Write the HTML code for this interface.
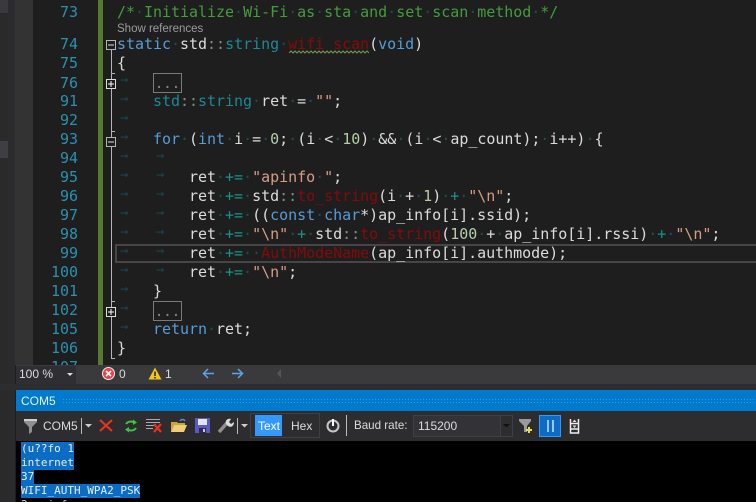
<!DOCTYPE html>
<html><head><meta charset="utf-8"><style>
html,body{margin:0;padding:0;background:#1e1e1e}
#p{position:relative;width:756px;height:502px;overflow:hidden;background:#1e1e1e;font-family:"DejaVu Sans Mono","Liberation Mono",monospace;font-size:15px;letter-spacing:-.03px}
#p div,#p svg{position:absolute}
.l{left:117px;height:20px;line-height:20px;white-space:pre;color:#dcdcdc;margin-top:-1px}
.n{left:40px;width:38px;text-align:right;height:20px;line-height:20px;color:#2b91af;margin-top:-1px}
.a{height:20px;line-height:20px;color:#1a4450;font-size:14px;transform:translateY(-3px)}
i{font-style:normal;color:#1d4d5a}
.c{color:#449c3d}.k{color:#569cd6}.t{color:#1c8a94}.o{color:#15968a}.s{color:#d69d85}.e{color:#860a0a}.m{color:#b5cea8}.g{color:#8a8a8a}
.u{font-family:"Liberation Sans",sans-serif;font-size:12px;color:#dcdcdc;white-space:pre;letter-spacing:0}
.box{border:1px solid #7a7a7a;box-sizing:border-box;width:29px;height:20px;left:153px;color:#8a8a8a;text-align:center;line-height:20px;font-size:14px}
.sel{left:21px;height:14px;background:#0a6cc4;color:#e6eef8;font-size:11px;line-height:14px;white-space:pre;letter-spacing:0}
</style></head><body><div id="p">
<div style="left:0;top:0;width:8px;height:502px;background:#2a2a2b"></div>
<div style="left:0;top:0;width:8px;height:13px;background:#3a3a3e"></div>
<div style="left:0;top:141px;width:8px;height:17px;background:#3e3e44"></div>
<div style="left:8px;top:0;width:7px;height:502px;background:#2b2b2e"></div>
<div style="left:15px;top:0;width:18px;height:365px;background:#333334"></div>
<div style="left:98px;top:0;width:5px;height:365px;background:#567a31"></div>

<div class="n" style="top:3px">73</div>
<div class="n" style="top:35px">74</div>
<div class="n" style="top:54px">75</div>
<div class="n" style="top:74px">76</div>
<div class="n" style="top:92px">91</div>
<div class="n" style="top:111px">92</div>
<div class="n" style="top:130px">93</div>
<div class="n" style="top:149px">94</div>
<div class="n" style="top:168px">95</div>
<div class="n" style="top:187px">96</div>
<div class="n" style="top:206px">97</div>
<div class="n" style="top:225px">98</div>
<div class="n" style="top:244px">99</div>
<div class="n" style="top:263px">100</div>
<div class="n" style="top:282px">101</div>
<div class="n" style="top:301px">102</div>
<div class="n" style="top:320px">105</div>
<div class="n" style="top:339px">106</div>
<div class="n" style="top:358px">107</div>

<div style="left:111px;top:50px;width:1px;height:308px;background:#b5b5b5"></div>
<div style="left:111px;top:358px;width:4px;height:1px;background:#b5b5b5"></div>
<div style="left:111px;top:73px;width:4px;height:1px;background:#b5b5b5"></div>
<div style="left:111px;top:131px;width:4px;height:1px;background:#b5b5b5"></div>
<div style="left:111px;top:301px;width:4px;height:1px;background:#b5b5b5"></div>
<svg style="left:106px;top:40px" width="10" height="10"><rect x=".5" y=".5" width="9" height="9" fill="#1e1e1e" stroke="#b5b5b5"/><path d="M2 5h6" stroke="#ddd"/></svg>
<svg style="left:106px;top:79px" width="10" height="10"><rect x=".5" y=".5" width="9" height="9" fill="#1e1e1e" stroke="#ddd"/><path d="M2 5h6M5 2v6" stroke="#fff"/></svg>
<svg style="left:106px;top:137px" width="10" height="10"><rect x=".5" y=".5" width="9" height="9" fill="#1e1e1e" stroke="#b5b5b5"/><path d="M2 5h6" stroke="#ddd"/></svg>
<svg style="left:106px;top:307px" width="10" height="10"><rect x=".5" y=".5" width="9" height="9" fill="#1e1e1e" stroke="#ddd"/><path d="M2 5h6M5 2v6" stroke="#fff"/></svg>

<div style="left:115px;top:244px;width:641px;height:19px;box-sizing:border-box;border:2px solid #464646;border-right:0"></div>

<div class="a" style="left:120px;top:73px">→</div>
<div class="a" style="left:120px;top:92px">→</div>
<div class="a" style="left:120px;top:111px">→</div>
<div class="a" style="left:120px;top:130px">→</div>
<div class="a" style="left:120px;top:149px">→</div><div class="a" style="left:156px;top:149px">→</div>
<div class="a" style="left:120px;top:168px">→</div><div class="a" style="left:156px;top:168px">→</div>
<div class="a" style="left:120px;top:187px">→</div><div class="a" style="left:156px;top:187px">→</div>
<div class="a" style="left:120px;top:206px">→</div><div class="a" style="left:156px;top:206px">→</div>
<div class="a" style="left:120px;top:225px">→</div><div class="a" style="left:156px;top:225px">→</div>
<div class="a" style="left:120px;top:244px">→</div><div class="a" style="left:156px;top:244px">→</div>
<div class="a" style="left:120px;top:263px">→</div><div class="a" style="left:156px;top:263px">→</div>
<div class="a" style="left:120px;top:282px">→</div>
<div class="a" style="left:120px;top:301px">→</div>
<div class="a" style="left:120px;top:320px">→</div>

<div class="l c" style="top:3px">/*<i>·</i>Initialize<i>·</i>Wi-Fi<i>·</i>as<i>·</i>sta<i>·</i>and<i>·</i>set<i>·</i>scan<i>·</i>method<i>·</i>*/</div>
<div class="l u" style="top:20px;font-size:11.5px;color:#9c9c9c">Show references</div>
<div class="l" style="top:35px"><span class="k">static</span><i>·</i>std<span class="g">::</span><span class="t">string</span><i>·</i><span class="e">wifi_scan</span>(<span class="k">void</span>)</div>
<svg style="left:289px;top:50px" width="80" height="4"><path d="M0 3 2 1 4 3 6 1 8 3 10 1 12 3 14 1 16 3 18 1 20 3 22 1 24 3 26 1 28 3 30 1 32 3 34 1 36 3 38 1 40 3 42 1 44 3 46 1 48 3 50 1 52 3 54 1 56 3 58 1 60 3 62 1 64 3 66 1 68 3 70 1 72 3 74 1 76 3 78 1 80 3" fill="none" stroke="#6f9a58" stroke-width="1"/></svg>
<div class="l" style="top:54px">{</div>
<div class="box" style="top:73px">...</div>
<div class="l" style="top:92px;left:153px"><span class="t">std</span><span class="g">::</span><span class="t">string</span><i>·</i>ret<i>·</i>=<i>·</i><span class="s">""</span>;</div>
<div class="l" style="top:130px;left:153px"><span class="k">for</span><i>·</i>(<span class="k">int</span><i>·</i>i<i>·</i>=<i>·</i><span class="m">0</span>;<i>·</i>(i<i>·</i>&lt;<i>·</i><span class="m">10</span>)<i>·</i>&amp;&amp;<i>·</i>(i<i>·</i>&lt;<i>·</i>ap_count);<i>·</i>i++)<i>·</i>{</div>
<div class="l" style="top:168px;left:189px">ret<i>·</i><span class="o">+=</span><i>·</i><span class="s">"apinfo<i>·</i>"</span>;</div>
<div class="l" style="top:187px;left:189px">ret<i>·</i><span class="o">+=</span><i>·</i>std<span class="g">::</span><span class="e">to_string</span>(i<i>·</i>+<i>·</i><span class="m">1</span>)<i>·</i><span class="o">+</span><i>·</i><span class="s">"\n"</span>;</div>
<div class="l" style="top:206px;left:189px">ret<i>·</i><span class="o">+=</span><i>·</i>((<span class="k">const</span><i>·</i><span class="k">char</span>*)ap_info[i].ssid);</div>
<div class="l" style="top:225px;left:189px">ret<i>·</i><span class="o">+=</span><i>·</i><span class="s">"\n"</span><i>·</i><span class="o">+</span><i>·</i>std<span class="g">::</span><span class="e">to_string</span>(<span class="m">100</span><i>·</i>+<i>·</i>ap_info[i].rssi)<i>·</i><span class="o">+</span><i>·</i><span class="s">"\n"</span>;</div>
<div class="l" style="top:244px;left:189px">ret<i>·</i><span class="o">+=</span><i>··</i><span class="e">AuthModeName</span>(ap_info[i].authmode);</div>
<div class="l" style="top:263px;left:189px">ret<i>·</i><span class="o">+=</span><i>·</i><span class="s">"\n"</span>;</div>
<div class="l" style="top:282px;left:153px">}</div>
<div class="box" style="top:301px">...</div>
<div class="l" style="top:320px;left:153px"><span class="k">return</span><i>·</i>ret;</div>
<div class="l" style="top:339px">}</div>

<!-- status strip -->
<div style="left:16px;top:365px;width:740px;height:19px;background:#3a3a3d"></div>
<div style="left:16px;top:366px;width:60px;height:18px;background:#2f2f33"></div>
<div class="u" style="left:19px;top:367px;line-height:15px">100 %</div>
<svg style="left:66px;top:372px" width="8" height="5"><path d="M1 1h6L4 4z" fill="#ddd"/></svg>
<svg style="left:102px;top:367px" width="13" height="13"><circle cx="6.500" cy="6.500" r="6" fill="#e8434b" stroke="#eee"/><path d="M4 4l5 5M9 4l-5 5" stroke="#fff" stroke-width="1.600"/></svg>
<div class="u" style="left:119px;top:367px;line-height:15px">0</div>
<svg style="left:148px;top:367px" width="14" height="13"><path d="M7 .5 13.500 12.500H.5z" fill="#f5c518"/><path d="M7 4.500v4.500M7 10v1.500" stroke="#222" stroke-width="1.500"/></svg>
<div class="u" style="left:165px;top:367px;line-height:15px">1</div>
<svg style="left:202px;top:368px" width="13" height="11"><path d="M12 5.500H1.500M6 1 1.500 5.500 6 10" fill="none" stroke="#5aa5e8" stroke-width="1.500"/></svg>
<svg style="left:231px;top:368px" width="13" height="11"><path d="M1 5.500h10.500M7 1l4.500 4.500L7 10" fill="none" stroke="#5aa5e8" stroke-width="1.500"/></svg>
<svg style="left:276px;top:368px" width="6" height="11"><path d="M5 1v9L1 5.500z" fill="#555558"/></svg>

<div style="left:0;top:384px;width:756px;height:6px;background:#2d2d30"></div>
<div style="left:16px;top:390px;width:740px;height:21px;background:#007acc"></div>
<div style="left:62px;top:398px;width:694px;height:5px;background-image:radial-gradient(#3a9ad8 .6px,transparent .8px);background-size:3px 3px"></div>
<div class="u" style="left:21px;top:393px;line-height:16px;font-size:12px;color:#e8f2fa">COM5</div>

<!-- toolbar -->
<div style="left:16px;top:411px;width:740px;height:30px;background:#2d2d30"></div>
<svg style="left:24px;top:418px" width="13" height="16"><path d="M0 1h13v3L8 9v5l-3 2V9L0 4z" fill="#8f8f8f"/><path d="M0 1h13v2H0z" fill="#cfcfcf"/></svg>
<div class="u" style="left:43px;top:418px;line-height:16px">COM5</div>
<div style="left:81px;top:418px;width:1px;height:16px;background:#bbb"></div>
<svg style="left:85px;top:424px" width="7" height="4"><path d="M0 0h7L3.500 3.500z" fill="#ccc"/></svg>
<svg style="left:99px;top:419px" width="14" height="13"><path d="M1 1l12 11M13 1 1 12" stroke="#e8321f" stroke-width="2.200"/></svg>
<svg style="left:124px;top:419px" width="14" height="14"><path d="M2 5C4 2 8 2 10 3.500M12 9c-2 3-6 3-8 1.500" fill="none" stroke="#3fc43f" stroke-width="2"/><path d="M9 .5l4 3-4 2.500zM5 8 1 10.500 5 13.500z" fill="#3fc43f"/></svg>
<svg style="left:146px;top:418px" width="18" height="15"><path d="M0 1.500h14M0 4.500h14M0 7.500h9M0 10.500h7" stroke="#a9a9b5"/><path d="M8 6l7 8M15 6l-7 8" stroke="#e8321f" stroke-width="2.200"/></svg>
<svg style="left:170px;top:417px" width="18" height="16"><path d="M1 5h6l1 1h7v2H4L1 15z" fill="#c9a24a"/><path d="M4 8h13l-3 7H1z" fill="#f0cf72"/><path d="M10 4c1-2 4-2 5 0" fill="none" stroke="#5a8ac8" stroke-width="1.500"/></svg>
<svg style="left:195px;top:418px" width="15" height="15"><rect width="15" height="15" fill="#5a5ac0"/><rect x="3" y="1" width="9" height="6" fill="#e4e4f4"/><rect x="4" y="10" width="7" height="5" fill="#2a2a55"/><rect x="8" y="11" width="2" height="3" fill="#ccc"/></svg>
<svg style="left:217px;top:417px" width="17" height="17"><path d="M2 15 10 6" stroke="#8f8f8f" stroke-width="3.500"/><path d="M9 7c-1-3 1-6 5-5l-2 3 2 2 3-2c0 4-3 6-6 4z" fill="#dcdcdc"/></svg>
<div style="left:237px;top:418px;width:1px;height:16px;background:#bbb"></div>
<svg style="left:241px;top:424px" width="7" height="4"><path d="M0 0h7L3.500 3.500z" fill="#ccc"/></svg>
<div style="left:250px;top:413px;width:70px;height:25px;box-sizing:border-box;border:1px solid #3f3f46"></div>
<div style="left:255px;top:415px;width:27px;height:21px;background:#3399ff"></div>
<div class="u" style="left:258px;top:418px;line-height:16px;color:#fff">Text</div>
<div class="u" style="left:291px;top:418px;line-height:16px">Hex</div>
<svg style="left:326px;top:418px" width="14" height="15"><circle cx="7" cy="8" r="5.500" fill="none" stroke="#c8c8c8" stroke-width="2"/><path d="M7 1v7" stroke="#fff" stroke-width="2"/></svg>
<div style="left:346px;top:415px;width:1px;height:21px;background:#bbb"></div>
<div class="u" style="left:354px;top:418px;line-height:16px;font-size:11.6px">Baud rate:</div>
<div style="left:413px;top:415px;width:100px;height:22px;box-sizing:border-box;border:1px solid #3f3f46;background:#333337"></div>
<div style="left:500px;top:415px;width:1px;height:22px;background:#3f3f46"></div>
<div style="left:501px;top:416px;width:11px;height:20px;background:#2d2d30"></div>
<svg style="left:503px;top:424px" width="8" height="5"><path d="M0 0h7L3.500 3.500z" fill="#111"/></svg>
<div class="u" style="left:418px;top:418px;line-height:16px">115200</div>
<svg style="left:519px;top:418px" width="15" height="16"><path d="M0 1h12v2L8 8v6H5V8L0 3z" fill="#9a9a9a"/><path d="M10 9v6M7 12h6" stroke="#e8e04a" stroke-width="2"/></svg>
<div style="left:539px;top:415px;width:22px;height:22px;box-sizing:border-box;border:1px solid #3399ff;background:#0a6cc4"></div>
<div style="left:547px;top:420px;width:2px;height:12px;background:#9cc4ee"></div>
<div style="left:552px;top:420px;width:2px;height:12px;background:#9cc4ee"></div>
<svg style="left:569px;top:418px" width="11" height="16"><path d="M1.500 1v14h8V1M1.500 5.500h8M1.500 11h8M1.500 15h8" fill="none" stroke="#eee" stroke-width="1.500"/><path d="M5.500 1.500 3.500 4h4zM5.500 10 3.500 7.500h4z" fill="#ddd"/></svg>

<!-- console -->
<div style="left:16px;top:441px;width:740px;height:61px;background:#000"></div>
<div class="sel" style="top:442px;width:53px">(u??fo 1</div>
<div class="sel" style="top:456px;width:53px">internet</div>
<div class="sel" style="top:470px;width:13px">37</div>
<div class="sel" style="top:484px;width:119px">WIFI_AUTH_WPA2_PSK</div>
<div class="sel" style="top:498px;background:none;color:#ccc">2 apinfo</div>
</div></body></html>
